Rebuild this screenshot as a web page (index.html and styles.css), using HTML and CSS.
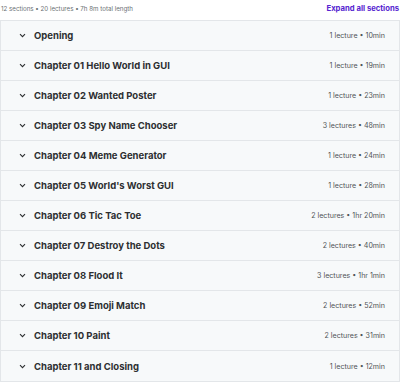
FILE: index.html
```html
<!DOCTYPE html>
<html lang="en">
<head>
    <meta charset="UTF-8">
    <title>Course content</title>
    <link rel="stylesheet" href="styles.css">
</head>
<body>
    <div class="top">
        <span class="resumen">12 sections • 20 lectures • 7h 8m total length</span>
        <button class="expandir">Expand all sections</button>
    </div>
    <div class="secciones">
        <div class="seccion"><span class="flecha"><svg width="7" height="5" viewBox="0 0 7 5"><path d="M1 1.2l2.5 2.5 2.5-2.5" fill="none" stroke="#2d2f31" stroke-width="1.1"/></svg></span><span class="nombre">Opening</span><span class="info">1 lecture • 10min</span></div>
        <div class="seccion"><span class="flecha"><svg width="7" height="5" viewBox="0 0 7 5"><path d="M1 1.2l2.5 2.5 2.5-2.5" fill="none" stroke="#2d2f31" stroke-width="1.1"/></svg></span><span class="nombre">Chapter 01 Hello World in GUI</span><span class="info">1 lecture • 19min</span></div>
        <div class="seccion"><span class="flecha"><svg width="7" height="5" viewBox="0 0 7 5"><path d="M1 1.2l2.5 2.5 2.5-2.5" fill="none" stroke="#2d2f31" stroke-width="1.1"/></svg></span><span class="nombre">Chapter 02 Wanted Poster</span><span class="info">1 lecture • 23min</span></div>
        <div class="seccion"><span class="flecha"><svg width="7" height="5" viewBox="0 0 7 5"><path d="M1 1.2l2.5 2.5 2.5-2.5" fill="none" stroke="#2d2f31" stroke-width="1.1"/></svg></span><span class="nombre">Chapter 03 Spy Name Chooser</span><span class="info">3 lectures • 48min</span></div>
        <div class="seccion"><span class="flecha"><svg width="7" height="5" viewBox="0 0 7 5"><path d="M1 1.2l2.5 2.5 2.5-2.5" fill="none" stroke="#2d2f31" stroke-width="1.1"/></svg></span><span class="nombre">Chapter 04 Meme Generator</span><span class="info">1 lecture • 24min</span></div>
        <div class="seccion"><span class="flecha"><svg width="7" height="5" viewBox="0 0 7 5"><path d="M1 1.2l2.5 2.5 2.5-2.5" fill="none" stroke="#2d2f31" stroke-width="1.1"/></svg></span><span class="nombre">Chapter 05 World's Worst GUI</span><span class="info">1 lecture • 28min</span></div>
        <div class="seccion"><span class="flecha"><svg width="7" height="5" viewBox="0 0 7 5"><path d="M1 1.2l2.5 2.5 2.5-2.5" fill="none" stroke="#2d2f31" stroke-width="1.1"/></svg></span><span class="nombre">Chapter 06 Tic Tac Toe</span><span class="info">2 lectures • 1hr 20min</span></div>
        <div class="seccion"><span class="flecha"><svg width="7" height="5" viewBox="0 0 7 5"><path d="M1 1.2l2.5 2.5 2.5-2.5" fill="none" stroke="#2d2f31" stroke-width="1.1"/></svg></span><span class="nombre">Chapter 07 Destroy the Dots</span><span class="info">2 lectures • 40min</span></div>
        <div class="seccion"><span class="flecha"><svg width="7" height="5" viewBox="0 0 7 5"><path d="M1 1.2l2.5 2.5 2.5-2.5" fill="none" stroke="#2d2f31" stroke-width="1.1"/></svg></span><span class="nombre">Chapter 08 Flood It</span><span class="info">3 lectures • 1hr 1min</span></div>
        <div class="seccion"><span class="flecha"><svg width="7" height="5" viewBox="0 0 7 5"><path d="M1 1.2l2.5 2.5 2.5-2.5" fill="none" stroke="#2d2f31" stroke-width="1.1"/></svg></span><span class="nombre">Chapter 09 Emoji Match</span><span class="info">2 lectures • 52min</span></div>
        <div class="seccion"><span class="flecha"><svg width="7" height="5" viewBox="0 0 7 5"><path d="M1 1.2l2.5 2.5 2.5-2.5" fill="none" stroke="#2d2f31" stroke-width="1.1"/></svg></span><span class="nombre">Chapter 10 Paint</span><span class="info">2 lectures • 31min</span></div>
        <div class="seccion"><span class="flecha"><svg width="7" height="5" viewBox="0 0 7 5"><path d="M1 1.2l2.5 2.5 2.5-2.5" fill="none" stroke="#2d2f31" stroke-width="1.1"/></svg></span><span class="nombre">Chapter 11 and Closing</span><span class="info">1 lecture • 12min</span></div>
    </div>
</body>
</html>
```

FILE: styles.css
```css
* {
    font-family: Inter, 'Noto Sans', sans-serif;
    box-sizing: border-box;
}
body {
    margin: 0;
    background-color: white;
    color: #2d2f31;
}
.top {
    height: 20px;
    display: flex;
    justify-content: space-between;
    align-items: center;
    padding: 0 1px 3px 1px;
}
.resumen {
    font-size: 6.2px;
    color: #6a6f73;
}
.expandir {
    border: none;
    background: none;
    padding: 0;
    font-size: 7.7px;
    font-weight: 700;
    color: #5624d0;
}
.secciones {
    border: 1px solid #e3e6e9;
}
.seccion {
    height: 30px;
    display: flex;
    align-items: center;
    background-color: #f7f9fa;
    border-bottom: 1px solid #e3e6e9;
    padding: 0 14px 0 18px;
}
.seccion:last-child {
    border-bottom: none;
}
.flecha {
    width: 15px;
    display: flex;
    align-items: center;
}
.nombre {
    flex: 1;
    font-size: 9.5px;
    font-weight: 700;
}
.info {
    font-size: 7.1px;
    color: #4f5356;
}
```
